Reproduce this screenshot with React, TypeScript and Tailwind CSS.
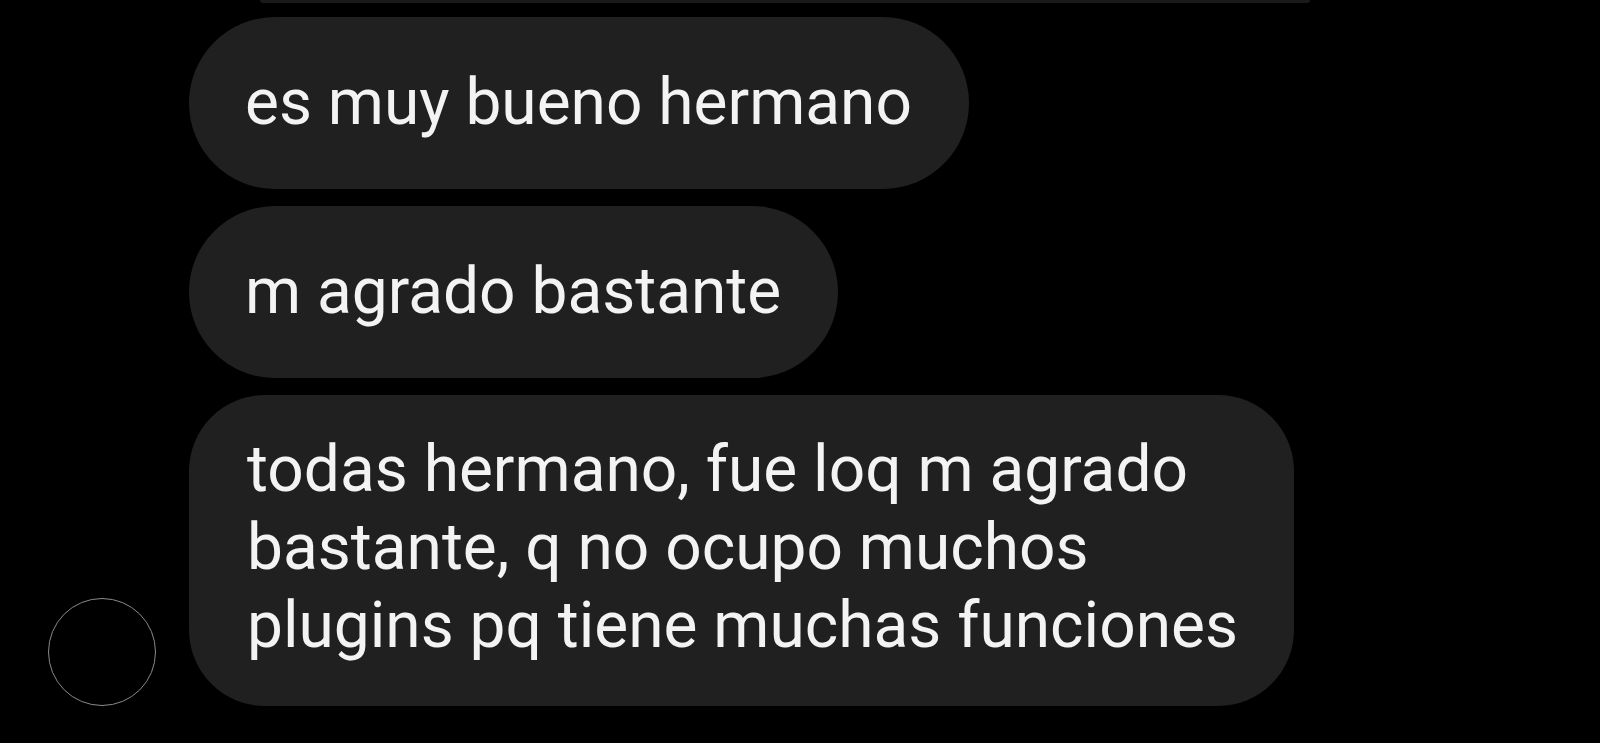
const messages = [
  { id: 1, lines: ["es muy bueno hermano"] },
  { id: 2, lines: ["m agrado bastante"] },
  {
    id: 3,
    lines: [
      "todas hermano, fue loq m agrado",
      "bastante, q no ocupo muchos",
      "plugins pq tiene muchas funciones",
    ],
  },
];

export default function App() {
  return (
    <div className="min-h-screen w-full bg-black overflow-hidden" style={{ fontFamily: "Roboto, Inter, sans-serif" }}>
      {/* tail of the previous item */}
      <div className="ml-[260px] w-[1050px] h-[3px] rounded-b bg-[#1a1a1a]" />

      <div className="mt-[14px] flex flex-col gap-[17px] pl-[48px]">
        {messages.map((m, i) => {
          const last = i === messages.length - 1;
          const multi = m.lines.length > 1;
          return (
            <div key={m.id} className="flex items-end gap-[33px]">
              <div className="w-[108px] h-[108px] flex-shrink-0">
                {last && <div className="w-full h-full rounded-full border border-[#8a8a8a]" />}
              </div>
              <div
                className={
                  multi
                    ? "w-fit bg-[#202020] rounded-[76px] pl-[58px] pr-[56px] pt-[36px] pb-[41px]"
                    : "w-fit bg-[#202020] rounded-full pl-[56px] pr-[57px] py-[47px]"
                }
              >
                {m.lines.map((l) => (
                  <div key={l} className="text-[64px] leading-[78px] text-[#f3f3f3] whitespace-nowrap">
                    {l}
                  </div>
                ))}
              </div>
            </div>
          );
        })}
      </div>
    </div>
  );
}
